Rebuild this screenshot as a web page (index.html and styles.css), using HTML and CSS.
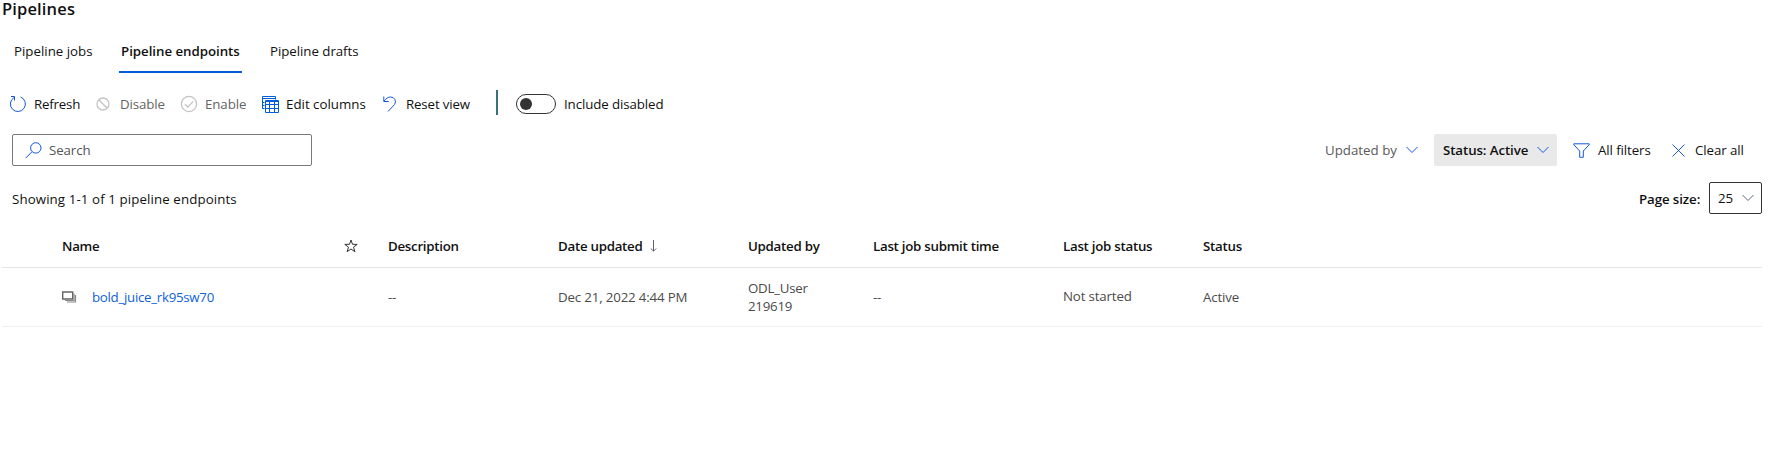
FILE: index.html
```html
<!DOCTYPE html>
<html lang="en">
<head>
<meta charset="utf-8">
<title>Pipelines</title>
<link rel="stylesheet" href="styles.css">
</head>
<body>
<main class="page">
  <h1 class="title">Pipelines</h1>
  <nav class="tabs">
    <a class="tab tab-jobs">Pipeline jobs</a>
    <a class="tab tab-endpoints active">Pipeline endpoints</a>
    <a class="tab tab-drafts">Pipeline drafts</a>
  </nav>
  <div class="toolbar">
    <button class="cmd cmd-refresh"><svg width="18" height="18" viewBox="0 0 18 18"><path class="blue" d="M11.500 2A7.500 7.500 0 1 1 5 2.600M2 1.500H5.500V5.500"/></svg><span>Refresh</span></button>
    <button class="cmd cmd-disable muted"><svg width="14" height="14" viewBox="0 0 14 14"><circle class="gray" cx="7" cy="7" r="6"/><path class="gray" d="M2.800 2.800l8.400 8.400"/></svg><span>Disable</span></button>
    <button class="cmd cmd-enable muted"><svg width="18" height="18" viewBox="0 0 18 18"><circle class="gray" cx="9" cy="9" r="7.600"/><path class="gray" d="M5 9.200l2.800 2.800 5.400-5.600"/></svg><span>Enable</span></button>
    <button class="cmd cmd-columns"><svg width="17" height="17" viewBox="0 0 17 17"><path class="blue strong" d="M.5 12.500V.5h13v3M.5 2.500h13M.5 6.500h2M.5 9.500h2M.5 12.500h2M3.500 4.500h13v12h-13zM3.500 5.500h13M3.500 8.500h13M3.500 12.500h13M7.500 6v10.500M12.500 6v10.500"/></svg><span>Edit columns</span></button>
    <button class="cmd cmd-reset"><svg width="14" height="16" viewBox="0 0 14 16"><path class="blue" d="M.8.5v5h5M1 5.300C3 2.500 5 1 7.500 1a4.700 4.700 0 0 1 4 7.500L5 15.500"/></svg><span>Reset view</span></button>
    <i class="divider"></i>
    <span class="toggle"><i class="knob"></i></span>
    <span class="toggle-label">Include disabled</span>
  </div>
  <div class="filters">
    <label class="search"><svg width="17" height="17" viewBox="0 0 17 17"><circle class="blue" cx="10.800" cy="5.900" r="5.200"/><path class="blue" d="M7 9.700L.6 16.200"/></svg><span>Search</span></label>
    <div class="filter-actions">
      <span class="filter updated"><span>Updated by</span><svg width="12" height="8" viewBox="0 0 12 8"><path class="blue" d="M.5 1L6 6.500 11.500 1"/></svg></span>
      <span class="filter chip"><span>Status: Active</span><svg width="12" height="8" viewBox="0 0 12 8"><path class="blue" d="M.5 1L6 6.500 11.500 1"/></svg></span>
      <span class="filter all"><svg width="17" height="15" viewBox="0 0 17 15"><path class="blue" d="M.8.8h15.400v1L10.300 8v6.300H6.700V8L.8 1.800z"/></svg><span>All filters</span></span>
      <span class="filter clear"><svg width="13" height="13" viewBox="0 0 13 13"><path class="blue" d="M.5.5l12 12M12.500.5l-12 12"/></svg><span>Clear all</span></span>
    </div>
  </div>
  <div class="summary">
    <span class="count">Showing 1-1 of 1 pipeline endpoints</span>
    <span class="size-label">Page size:</span>
    <span class="size-select"><span>25</span><svg width="12" height="8" viewBox="0 0 12 8"><path class="slate" d="M.5 1L6 6.500 11.500 1"/></svg></span>
  </div>
  <section class="table">
    <div class="row head">
      <span class="h-name">Name</span>
      <span><svg class="star" width="14" height="14" viewBox="0 0 14 14"><path class="dark" d="M7 1l1.500 4.300 4.700.1-3.700 2.800 1.400 4.500L7 10l-3.900 2.700 1.400-4.500L.8 5.400l4.700-.1z"/></svg></span>
      <span class="h-desc">Description</span>
      <span class="h-date"><span>Date updated</span><svg width="7" height="12" viewBox="0 0 7 12"><path class="arrow" d="M3.500 0v11M.8 8.500l2.700 2.700 2.700-2.700"/></svg></span>
      <span class="h-by">Updated by</span>
      <span class="h-submit">Last job submit time</span>
      <span class="h-job">Last job status</span>
      <span class="h-status">Status</span>
    </div>
    <div class="row body">
      <span class="name"><svg width="15" height="12" viewBox="0 0 15 12"><path class="stack" d="M.7 1h10v7H.7z"/><path class="stack-fill" d="M12 2.500v7H3M13.500 4v7H5"/></svg><a class="link">bold_juice_rk95sw70</a></span>
      <span></span>
      <span class="dashes">--</span>
      <span class="c-date">Dec 21, 2022 4:44 PM</span>
      <span class="c-by">ODL_User<br>219619</span>
      <span class="dashes">--</span>
      <span class="c-job">Not started</span>
      <span class="c-status">Active</span>
    </div>
  </section>
</main>
</body>
</html>
```
FILE: styles.css
```css
* { box-sizing: border-box; }
body {
  margin: 0;
  background: #fff;
  color: #111;
  font: 13.3px/18px "Open Sans", "Noto Sans", sans-serif;
  letter-spacing: -0.1px;
  white-space: nowrap;
}
svg { display: block; flex: none; fill: none; }
.blue { stroke: #1456dc; }
.strong { stroke: #015cda; }
.gray { stroke: #c4c4c4; stroke-width: 1.3; }
.slate { stroke: #5c6b78; }
.dark { stroke: #333; }
.arrow { stroke: #65616f; }
.stack { stroke: #666; stroke-width: 1.4; }
.stack-fill { stroke: #8a8a8a; stroke-width: 1.2; }
.page { height: 468px; padding: 0 10px 0 2px; }
.title { margin: 0; height: 32px; font-size: 16.5px; line-height: 18px; font-weight: 600; letter-spacing: 0.15px; }
.tabs { display: flex; height: 41px; padding-left: 2px; }
.tab { height: 41px; padding: 10px 0 0; }
.tab-jobs { width: 115px; padding-left: 10px; letter-spacing: 0; }
.tab-endpoints { width: 123px; padding-left: 2px; letter-spacing: -0.04px; }
.tab-drafts { padding-left: 28px; letter-spacing: -0.05px; }
.active { font-weight: 600; border-bottom: 2px solid #015cda; }
.toolbar { display: flex; align-items: center; height: 50px; padding: 0 0 0 7px; margin-top: 6px; }
.cmd { display: flex; align-items: center; height: 32px; padding: 0; border: 0; background: none; font: inherit; letter-spacing: inherit; color: inherit; text-align: left; }
.cmd-refresh { width: 87px; gap: 7px; letter-spacing: -0.2px; }
.cmd-disable { width: 84px; gap: 10px; }
.cmd-enable { width: 82px; gap: 7px; }
.cmd-columns { width: 121px; gap: 7px; letter-spacing: 0; }
.cmd-reset { width: 113px; gap: 9px; letter-spacing: -0.15px; }
.muted { color: #646464; }
.divider { width: 2px; height: 25px; margin-top: -4px; background: #39707b; }
.toggle { width: 40px; height: 20px; margin-left: 18px; padding: 3px; border: 1px solid #333; border-radius: 10px; }
.knob { display: block; width: 12px; height: 12px; border-radius: 50%; background: #333; }
.toggle-label { margin-left: 8px; }
.filters { display: flex; justify-content: space-between; height: 32px; margin: 5px 0 0 10px; }
.search { display: flex; align-items: center; gap: 7px; width: 300px; padding-left: 12px; border: 1px solid #797979; border-radius: 2px; color: #555; }
.filter-actions { display: flex; }
.filter { display: flex; align-items: center; }
.updated { width: 109px; gap: 9px; color: #5a5a5a; letter-spacing: 0; }
.chip { width: 123px; padding-left: 9px; gap: 9px; background: #e9e9e9; border-radius: 2px; font-weight: 600; }
.all { width: 115px; padding-left: 16px; gap: 8px; }
.clear { width: 90px; gap: 10px; }
.summary { display: flex; align-items: center; height: 32px; margin: 16px 0 0 10px; }
.count { flex: 1; padding-top: 2px; letter-spacing: 0.1px; }
.size-label { width: 70px; padding-top: 2px; font-weight: 600; }
.size-select { display: flex; align-items: center; gap: 9px; width: 53px; height: 32px; padding-left: 8px; border: 1px solid #333; border-radius: 2px; }
.table { margin-top: 12px; }
.row { display: grid; grid-template-columns: 282px 44px 170px 190px 125px 190px 140px 1fr; align-items: center; padding-left: 60px; }
.head { height: 42px; border-bottom: 1px solid #e5e5e5; font-weight: 600; padding-bottom: 2px; letter-spacing: -0.27px; }
.body { height: 59px; border-bottom: 1px solid #f0f0f0; color: #4b4b4b; letter-spacing: -0.16px; }
.h-date { display: flex; align-items: center; gap: 7px; }
.name { display: flex; align-items: center; gap: 15px; }
.link { color: #0f62d8; letter-spacing: -0.29px; }
.c-by { letter-spacing: -0.25px; }
.c-job { padding-bottom: 2px; }
```
